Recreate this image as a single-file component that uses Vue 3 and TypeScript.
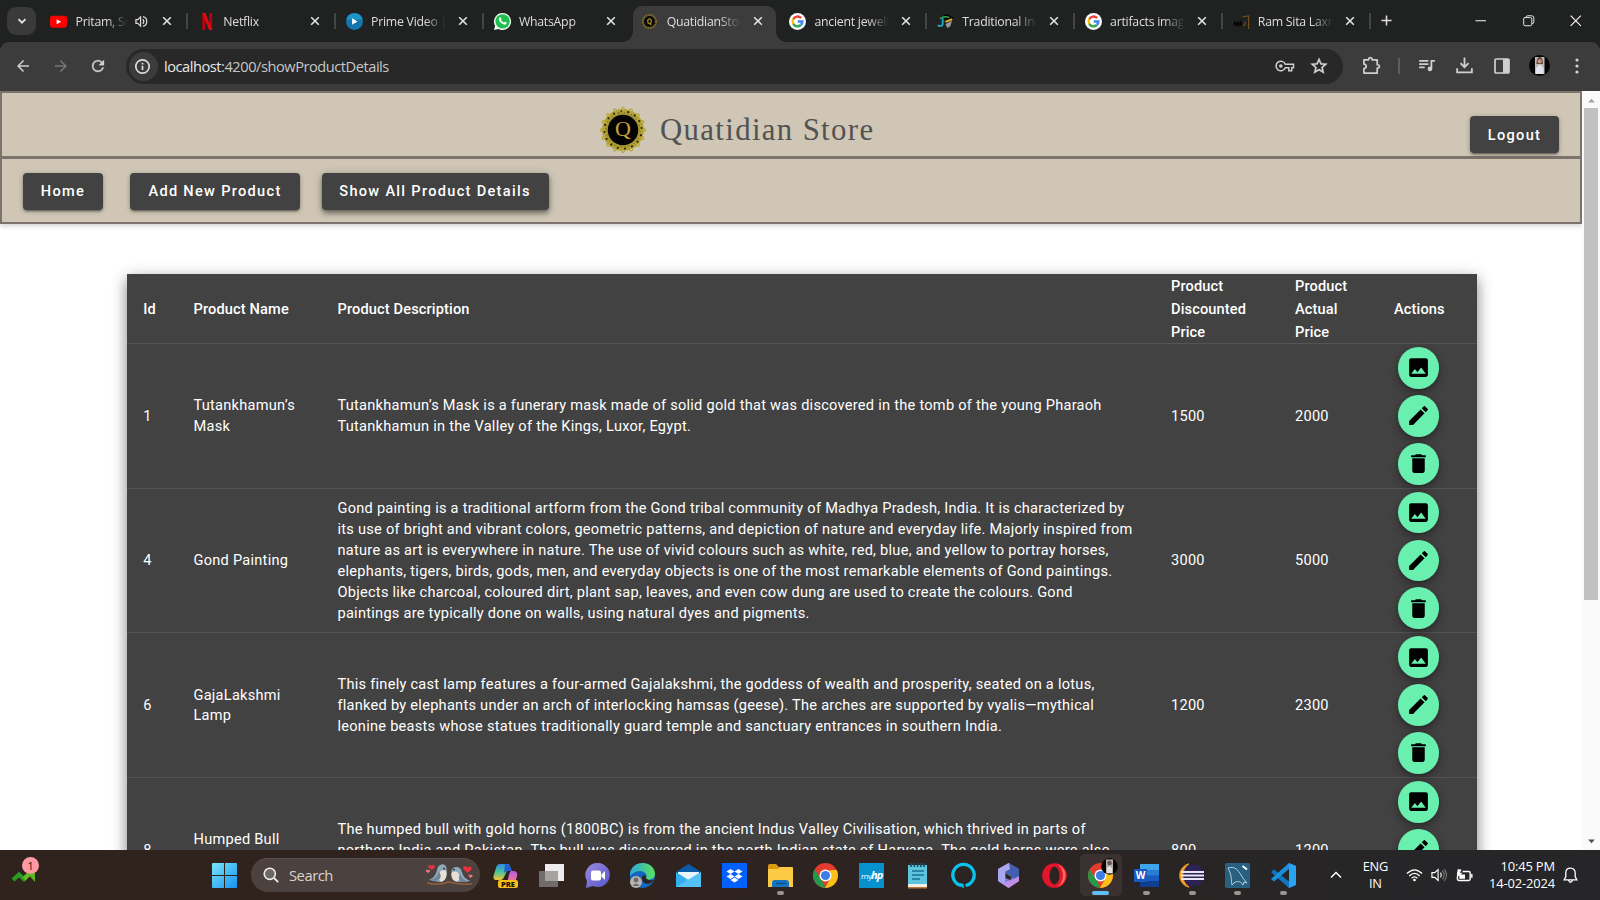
<script setup lang="ts">
interface Tab {
  title: string
  icon: string
  active?: boolean
  audio?: boolean
}
interface Product {
  id: number
  name: string[]
  lines: string[]
  discounted: number
  actual: number
}

const tabs: Tab[] = [
  { title: 'Pritam, Song', icon: 'youtube', audio: true },
  { title: 'Netflix', icon: 'netflix' },
  { title: 'Prime Video | ', icon: 'prime' },
  { title: 'WhatsApp', icon: 'whatsapp' },
  { title: 'QuatidianStore', icon: 'store', active: true },
  { title: 'ancient jewellery', icon: 'google' },
  { title: 'Traditional Indian', icon: 'trad' },
  { title: 'artifacts images', icon: 'google' },
  { title: 'Ram Sita Laxman', icon: 'ram' },
]

const products: Product[] = [
  {
    id: 1,
    name: ['Tutankhamun’s', 'Mask'],
    lines: [
      'Tutankhamun’s Mask is a funerary mask made of solid gold that was discovered in the tomb of the young Pharaoh',
      'Tutankhamun in the Valley of the Kings, Luxor, Egypt.',
    ],
    discounted: 1500,
    actual: 2000,
  },
  {
    id: 4,
    name: ['Gond Painting'],
    lines: [
      'Gond painting is a traditional artform from the Gond tribal community of Madhya Pradesh, India. It is characterized by',
      'its use of bright and vibrant colors, geometric patterns, and depiction of nature and everyday life. Majorly inspired from',
      'nature as art is everywhere in nature. The use of vivid colours such as white, red, blue, and yellow to portray horses,',
      'elephants, tigers, birds, gods, men, and everyday objects is one of the most remarkable elements of Gond paintings.',
      'Objects like charcoal, coloured dirt, plant sap, leaves, and even cow dung are used to create the colours. Gond',
      'paintings are typically done on walls, using natural dyes and pigments.',
    ],
    discounted: 3000,
    actual: 5000,
  },
  {
    id: 6,
    name: ['GajaLakshmi', 'Lamp'],
    lines: [
      'This finely cast lamp features a four-armed Gajalakshmi, the goddess of wealth and prosperity, seated on a lotus,',
      'flanked by elephants under an arch of interlocking hamsas (geese). The arches are supported by vyalis—mythical',
      'leonine beasts whose statues traditionally guard temple and sanctuary entrances in southern India.',
    ],
    discounted: 1200,
    actual: 2300,
  },
  {
    id: 8,
    name: ['Humped Bull', '\u00a0'],
    lines: [
      'The humped bull with gold horns (1800BC) is from the ancient Indus Valley Civilisation, which thrived in parts of',
      'northern India and Pakistan. The bull was discovered in the north Indian state of Haryana. The gold horns were also',
      '\u00a0',
    ],
    discounted: 800,
    actual: 1200,
  },
]

const actionIcons: string[] = [
  'M21 19V5c0-1.1-.9-2-2-2H5c-1.1 0-2 .9-2 2v14c0 1.1.9 2 2 2h14c1.1 0 2-.9 2-2zM8.5 13.5l2.5 3.01L14.5 12l4.500 6H5l3.500-4.500z',
  'M3 17.25V21h3.750L17.810 9.940l-3.750-3.750L3 17.250zM20.710 7.040c.39-.39.39-1.020 0-1.410l-2.340-2.340c-.39-.39-1.020-.39-1.410 0l-1.830 1.830 3.750 3.750 1.830-1.830z',
  'M6 19c0 1.100.9 2 2 2h8c1.100 0 2-.9 2-2V7H6v12zM19 4h-3.500l-1-1h-5l-1 1H5v2h14V4z',
]
const petals = Array.from({ length: 16 }, (_, i) => i * 22.5)
</script>

<template>
  <div class="screen">
    <div class="tabstrip">
      <div class="tabsearch">
        <svg width="12" height="12" viewBox="0 0 12 12"><path d="M2.500 4.200 6 7.700l3.500-3.500" fill="none" stroke="#e4e4e4" stroke-width="1.800" /></svg>
      </div>
      <div class="tabs">
        <div v-for="(t, i) in tabs" :key="i" class="tab" :class="{ active: t.active, sep: !t.active && i !== 3 }">
          <svg class="fav" viewBox="0 0 18 18">
            <g v-if="t.icon === 'youtube'"><rect x="0" y="3" width="18" height="12.500" rx="3" fill="#f00" /><path d="M7 6.500v5.500L11.800 9.200z" fill="#fff" /></g>
            <g v-else-if="t.icon === 'netflix'"><path d="M4.500 0h3.200v18H4.500zM11.800 0H15v18h-3.200z" fill="#b1060f" /><path d="M4.500 0h3.200L15 18h-3.200z" fill="#e50914" /></g>
            <g v-else-if="t.icon === 'prime'"><circle cx="9" cy="9" r="9" fill="#1475ae" /><path d="M.3 7a9 9 0 0 1 17.400 0z" fill="#1c94c9" /><path d="M6.500 5.500v7L12.200 9z" fill="#fff" /></g>
            <g v-else-if="t.icon === 'whatsapp'">
              <path d="M9 0a9 9 0 1 1-4.200 16.900L0 18l1.200-4.500A9 9 0 0 1 9 0z" fill="#f4f8f4" /><circle cx="9.100" cy="8.900" r="7.600" fill="#1fbf4b" />
              <path d="M6.200 4.800c.8-.6 1.200-.1 1.700 1.400.1.500-.7 1-.5 1.300.6 1.200 1.700 2.100 2.900 2.600.4.100.9-1.100 1.300-.9l1.700.9c.5.400-.2 2.200-1.800 2.300-2.300.1-6.300-3.200-6.400-5.700 0-.8.400-1.500 1.100-1.900z" fill="#fff" />
            </g>
            <g v-else-if="t.icon === 'store'"><circle cx="9" cy="9" r="7" fill="none" stroke="#7d6c22" stroke-width="2" stroke-dasharray="2 .8" /><circle cx="9" cy="9" r="5.800" fill="#080806" /><ellipse cx="9" cy="8.700" rx="1.900" ry="2.500" fill="none" stroke="#a8861f" stroke-width="1.300" /><path d="M9 11l2 1.800" stroke="#a8861f" stroke-width="1.200" /></g>
            <g v-else-if="t.icon === 'google'">
              <circle cx="9" cy="9" r="9" fill="#fff" /><g fill="none" stroke-width="2.600"><path d="M4.500 6.500A5.200 5.200 0 0 1 12.800 5.400" stroke="#ea4335" /><path d="M4.500 6.500a5.200 5.200 0 0 0 0 5" stroke="#fbbc05" /><path d="M4.500 11.500a5.200 5.200 0 0 0 8 1.200" stroke="#34a853" /><path d="M12.500 12.700A5.200 5.200 0 0 0 14.200 9H9.200" stroke="#4285f4" /></g>
            </g>
            <g v-else-if="t.icon === 'trad'"><path d="M2 5l8-4 8 4-6 3z" fill="#050505" /><path d="M3 6c4-3 8-2 10-1" stroke="#39a45b" stroke-width="1.500" fill="none" /><path d="M6 5.500v6c0 3-4 3-5 1" fill="none" stroke="#17a7c8" stroke-width="2" /><path d="M9 9.500l7-3" stroke="#e6b32c" stroke-width="2" /><path d="M9 12l7-4-2 6-3 2z" fill="#999" /></g>
            <g v-else><path d="M1 13l1-3 2 3 1-3 2 3 1-3 2 4" fill="none" stroke="#080808" stroke-width="2" /><path d="M10 4l6.500-1v14M10 13c2 1 3-1 3-4" fill="none" stroke="#70501d" stroke-width="1.200" /></g>
          </svg>
          <span class="title">{{ t.title }}</span>
          <svg v-if="t.audio" class="audio" viewBox="0 0 14 14"><path d="M1 5h2l3-3v10L3 9H1z" fill="none" stroke="#ddd" stroke-width="1.300" /><path d="M8.500 4.500q2 2.500 0 5M8.500 1.800c5.500 1 5.500 9.400 0 10.400" fill="none" stroke="#ddd" stroke-width="1.300" /></svg>
          <svg class="close" viewBox="0 0 10 10"><path d="M1.200 1.200l7.600 7.600M8.800 1.200 1.200 8.800" stroke="#e2e2e2" stroke-width="1.600" /></svg>
        </div>
      </div>
      <svg class="plus" viewBox="0 0 12 12"><path d="M6 .5v11M.5 6h11" stroke="#ddd" stroke-width="1.700" /></svg>
      <div class="winctl">
        <svg viewBox="0 0 12 12"><path d="M.5 6h11" stroke="#fff" stroke-width="1" /></svg>
        <svg viewBox="0 0 12 12"><rect x=".7" y="2.700" width="8.500" height="8.500" rx="1.500" fill="none" stroke="#eee" /><path d="M3 2.500Q3 .8 5 .8h4q2.300 0 2.300 2.300v4q0 2-1.800 2" fill="none" stroke="#eee" /></svg>
        <svg viewBox="0 0 12 12"><path d="M.7.700l10.600 10.600M11.300.700.700 11.300" stroke="#fff" stroke-width="1.100" /></svg>
      </div>
    </div>

    <div class="toolbar">
      <svg class="nav" viewBox="0 0 24 24"><path d="M20 11H7.830l5.590-5.590L12 4l-8 8 8 8 1.410-1.410L7.830 13H20z" fill="#cfcfcf" /></svg>
      <svg class="nav" viewBox="0 0 24 24"><path d="M4 13h12.170l-5.590 5.590L12 20l8-8-8-8-1.410 1.410L16.170 11H4z" fill="#757575" /></svg>
      <svg class="nav" viewBox="0 0 24 24"><path d="M17.650 6.350A7.960 7.960 0 0 0 12 4a8 8 0 1 0 7.730 10h-2.080A6 6 0 1 1 12 6c1.660 0 3.140.69 4.220 1.780L13 11h7V4z" fill="#cfcfcf" stroke="#cfcfcf" stroke-width=".4" /></svg>
      <div class="omnibox">
        <span class="info"><svg viewBox="0 0 16 16"><circle cx="8" cy="8" r="6.300" fill="none" stroke="#ddd" stroke-width="1.600" /><path d="M8 7.200v4.200M8 4.500v1.600" stroke="#ddd" stroke-width="1.600" /></svg></span>
        <span class="url"><b>localhost</b>:4200/showProductDetails</span>
        <svg class="key" viewBox="0 0 20 14"><path d="M10.300 5.200h8.200v3.600h-1.800v2.900h-2.900V8.800h-3.500a4.800 4.800 0 1 1 0-3.600z" fill="none" stroke="#cfcfcf" stroke-width="1.500" /><circle cx="5.800" cy="7" r="1.800" fill="#cfcfcf" /></svg>
        <svg class="star" viewBox="0 0 24 24"><path d="M22 9.240l-7.190-.62L12 2 9.190 8.630 2 9.240l5.460 4.730L5.820 21 12 17.270 18.180 21l-1.630-7.030L22 9.240zM12 15.400l-3.760 2.270 1-4.280-3.320-2.880 4.380-.38L12 6.100l1.710 4.040 4.380.38-3.320 2.880 1 4.280L12 15.400z" fill="#d8d8d8" stroke="#d8d8d8" stroke-width=".4" /></svg>
      </div>
      <svg class="t-ext" viewBox="0 0 20 20"><path d="M2 4h5V3.500a1.800 1.800 0 0 1 3.600 0V4H16v5.200h.5a1.800 1.800 0 0 1 0 3.600H16V18H2v-4.700c3.300-.5 3.300-4.400 0-4.800z" fill="none" stroke="#cfcfcf" stroke-width="1.800" stroke-linejoin="round" /></svg>
      <i class="bar"></i>
      <svg class="t-media" viewBox="0 0 18 14"><path d="M0 2h10M0 5.500h10M0 9h6" stroke="#cfcfcf" stroke-width="1.700" /><path d="M13.200 10.500V2H17" fill="none" stroke="#cfcfcf" stroke-width="1.900" /><circle cx="11.600" cy="10.700" r="2.500" fill="#cfcfcf" /></svg>
      <svg class="t-down" viewBox="0 0 18 18"><path d="M9 .5V10M4.700 6.500 9 10.800l4.300-4.300M1.200 12v4.200h15.600V12" fill="none" stroke="#cfcfcf" stroke-width="1.900" /></svg>
      <svg class="t-side" viewBox="0 0 16 16"><rect x="1" y="1" width="14" height="14" rx="1" fill="none" stroke="#cfcfcf" stroke-width="1.700" /><path d="M9 1h6v14H9z" fill="#cfcfcf" /></svg>
      <svg class="t-av" viewBox="0 0 21 21"><circle cx="10.500" cy="10.500" r="10.500" fill="#050505" /><path d="M6 2h9.500v17H6z" fill="#bdb8b4" /><path d="M7.500 9q0-7 3.200-7t3.200 7z" fill="#5a3b35" /><circle cx="10.700" cy="6.200" r="2.200" fill="#c98f7e" /><path d="M7 19v-6l3.500-3.500L14.500 13v6z" fill="#dfe4ea" /></svg>
      <svg class="t-dots" viewBox="0 0 4 16"><circle cx="2" cy="2" r="1.600" fill="#d5d5d5" /><circle cx="2" cy="8" r="1.600" fill="#d5d5d5" /><circle cx="2" cy="14" r="1.600" fill="#d5d5d5" /></svg>
    </div>

    <div class="viewport">
      <div class="page">
        <header>
          <div class="brand">
            <svg class="logo" viewBox="0 0 48 48">
              <g v-for="p in petals" :key="p" :transform="`rotate(${p} 24 24)`"><path d="M19.700 9c-1.500-4 0-6.500 2.300-5.500C21.800.2 26.200.2 26 3.500c2.300-1 3.800 1.500 2.300 5.500z" fill="#b3a238" /><circle cx="22" cy="5.500" r="1.100" fill="#2a250c" /><circle cx="26.300" cy="7" r=".9" fill="#3b340f" /><circle cx="24" cy="2.800" r=".6" fill="#efe9a0" /></g>
              <circle cx="24" cy="24" r="16.500" fill="none" stroke="#a08f2d" stroke-width="1.500" stroke-dasharray="3 1.500" />
              <circle cx="24" cy="24" r="15.300" fill="#030303" />
              <text x="24" y="30.200" text-anchor="middle" class="q">Q</text>
            </svg>
            <span class="brandname">Quatidian Store</span>
            <button class="btn logout">Logout</button>
          </div>
          <nav class="menu">
            <button class="btn home">Home</button>
            <button class="btn add">Add New Product</button>
            <button class="btn show">Show All Product Details</button>
          </nav>
        </header>
        <main class="table">
          <div class="row head">
            <span>Id</span><span>Product Name</span><span>Product Description</span>
            <span>Product<br />Discounted<br />Price</span><span>Product<br />Actual<br />Price</span><span>Actions</span>
          </div>
          <div v-for="p in products" :key="p.id" class="row">
            <span>{{ p.id }}</span>
            <span><div v-for="n in p.name" :key="n">{{ n }}</div></span>
            <span><div v-for="l in p.lines" :key="l">{{ l }}</div></span>
            <span>{{ p.discounted }}</span>
            <span>{{ p.actual }}</span>
            <span class="actions">
              <button v-for="(d, k) in actionIcons" :key="k" class="fab"><svg viewBox="0 0 24 24"><path :d="d" /></svg></button>
            </span>
          </div>
        </main>
      </div>
      <div class="scroll">
        <svg viewBox="0 0 10 6"><path d="M1 5.500 5 1l4 4.500z" fill="#a3a3a3" /></svg>
        <div class="thumb"></div>
        <svg class="dn" viewBox="0 0 10 6"><path d="M1 .5 5 5 9 .5z" fill="#505050" /></svg>
      </div>
    </div>

    <footer class="taskbar">
      <div class="widget">
        <svg viewBox="0 0 26 26"><path d="M2 21l6-5.500 5 4.500 7-7" fill="none" stroke="#2c9a22" stroke-width="4.200" /><path d="M13 20l8-8" stroke="#68bd25" stroke-width="4.200" /><path d="M15 13h9v10z" fill="#5db51f" /></svg>
        <span class="badge">1</span>
      </div>
      <svg class="start" viewBox="0 0 25 25"><defs><linearGradient id="win" gradientUnits="userSpaceOnUse" x1="0" y1="0" x2="25" y2="25"><stop offset="0" stop-color="#7be6fb" /><stop offset="1" stop-color="#1493ef" /></linearGradient></defs><path d="M0 1q0-1 1-1h11v12H0zM13 0h11q1 0 1 1v11H13zM0 13h12v12H1q-1 0-1-1zM13 13h12v11q0 1-1 1H13z" fill="url(#win)" /></svg>
      <div class="search">
        <svg class="glass" viewBox="0 0 16 16"><circle cx="6.800" cy="6.800" r="5.600" fill="#6d6765" stroke="#ececec" stroke-width="1.600" /><path d="M11 11l4.200 4.200" stroke="#ececec" stroke-width="1.800" /></svg>
        <span>Search</span>
        <svg class="birds" viewBox="0 0 50 24">
          <path d="M2 20q12 3 22-1 12 3 24 2" fill="none" stroke="#8a5d3b" stroke-width="1.800" />
          <path d="M4 17q6-2 8-9c1-8 9-9 10-3 1 8-1 14-7 14-4 0-5-1-11-2z" fill="#8ea9bb" /><path d="M16 8q6-3 6 3 0 7-6 8-5-5 0-11z" fill="#e8dfd5" /><path d="M5 17q8-1 9-9 5 8-2 10z" fill="#6d8799" />
          <path d="M46 18q-6-2-8-8c-1-8-10-8-11-2-1 7 1 11 7 11 4 0 6 0 12-1z" fill="#8ea9bb" /><path d="M33 9q-6-2-6 3 1 6 6 7 5-5 0-10z" fill="#e8dfd5" /><path d="M46 19q-8-1-10-8-4 7 3 8z" fill="#6d8799" />
          <circle cx="19.500" cy="5.500" r=".9" fill="#222" /><circle cx="29.500" cy="6.500" r=".9" fill="#222" />
          <path d="M7 7 3.500 4c-1-2 2-3 3-1 1-2 4-1 3.500 1zM43.500 10 39 6c-1-3 3-4 4.500-1.500C45 2 48.500 4 47.500 6.500z" fill="#ea3340" /><path d="M3 10 .8 8C.5 6.500 2.500 6 3 7.300 4 6 5.500 7 5 8.500zM46.500 15l-2-2c-.3-1.500 1.700-2 2-.6.800-1.200 2.500-.4 2 1z" fill="#f47983" />
        </svg>
      </div>
      <div class="apps">
        <div class="app">
          <svg viewBox="0 0 25 25"><defs><linearGradient id="cpa" x1="0" y1="0" x2="0" y2="1"><stop offset="0" stop-color="#2d8be8" /><stop offset=".5" stop-color="#49c596" /><stop offset="1" stop-color="#f7c431" /></linearGradient><linearGradient id="cpb" x1="0" y1="0" x2="0" y2="1"><stop offset="0" stop-color="#b45cf0" /><stop offset="1" stop-color="#ff7b7b" /></linearGradient></defs>
            <path d="M7 1h8q2 0 1.500 2L11 14q-1 3-4 3H3q-3 0-2.500-4L3 5q1-4 4-4z" fill="url(#cpa)" /><path d="M12 1q5 0 6 4l1 3h-5l-3 2z" fill="#235fcf" /><path d="M18 8h3q4 1 3 5l-2 7h-8l2-8q.500-3 2-4z" fill="url(#cpb)" /><rect x="5" y="17" width="20" height="8" rx="2" fill="#f7bd1b" /><text x="15" y="23.600" text-anchor="middle" class="pre">PRE</text></svg>
        </div>
        <div class="app"><svg viewBox="0 0 25 25"><path d="M6 1h19v17H6z" fill="#ededed" /><path d="M0 8h19v16H0z" fill="#6f6c6b" /><path d="M6 8h13v10H6z" fill="#a5a3a2" /></svg></div>
        <div class="app"><svg viewBox="0 0 25 25"><defs><linearGradient id="ch" x1="0" y1="0" x2="1" y2="1"><stop offset="0" stop-color="#9a8be0" /><stop offset="1" stop-color="#5656c8" /></linearGradient></defs><path d="M13 0a12 12 0 1 1-5 23L1 25l1-7A12 12 0 0 1 13 0z" fill="url(#ch)" /><rect x="6" y="7.500" width="10" height="10" rx="2" fill="#fff" /><path d="M16.500 11.500 20 8v9l-3.500-3.500z" fill="#fff" /></svg></div>
        <div class="app"><svg viewBox="0 0 25 25"><defs><linearGradient id="ed" x1="0" y1="0" x2="1" y2="0"><stop offset="0" stop-color="#2aa9df" /><stop offset="1" stop-color="#5be05a" /></linearGradient></defs><circle cx="12.500" cy="12.500" r="12.500" fill="#1566bd" /><path d="M0 11C1-3 24-4 25 11c0 6-8 7-9 4 2-3-1-7-6-7-4 0-8 2-10 5z" fill="url(#ed)" /><path d="M16 13c-1 4 4 5 8 4l-3 3c-6 2-9-1-9-5q0-4 4-2z" fill="#2e2321" /><circle cx="6" cy="19" r="6" fill="#b8b4b1" /><circle cx="6" cy="17" r="2.400" fill="#706a67" /><path d="M2.500 23q3.500-5 7 0z" fill="#706a67" /></svg></div>
        <div class="app"><svg viewBox="0 0 25 25"><path d="M0 9 12.500 1 25 9z" fill="#0a5ca8" /><path d="M2 9h21v9H2z" fill="#e9f5fc" /><path d="M0 9l12.500 8L25 9v15H0z" fill="#35aef0" /><path d="M25 9v15H0z" fill="#55c2f7" /></svg></div>
        <div class="app"><svg viewBox="0 0 25 25"><path d="M0 0h25v25H0z" fill="#0061fe" /><path d="M8.500 6l4 2.500-4 2.500-4-2.500zM16.500 6l4 2.500-4 2.500-4-2.500zM8.500 11l4 2.500-4 2.500-4-2.500zM16.500 11l4 2.500-4 2.500-4-2.500zM12.500 14.500l4 2.500-4 2.500-4-2.500z" fill="#fff" /></svg></div>
        <div class="app run"><svg viewBox="0 0 25 25"><path d="M0 3q0-2 2-2h6l3 3h14v6H0z" fill="#dc9a12" /><path d="M0 6h10l2-2h11q2 0 2 2v18H0z" fill="#fcca45" /><path d="M4 24v-4q0-3 3-3h11q3 0 3 3v4z" fill="#1473bd" /><path d="M8 20.500h10" stroke="#0c4f91" stroke-width="1.500" /></svg></div>
        <div class="app"><svg viewBox="0 0 25 25"><circle cx="12.500" cy="12.500" r="12.500" fill="#e33b2e" /><path d="M1.700 6.300 9 18l3.500 7A12.500 12.500 0 0 1 1.700 6.300z" fill="#23994a" /><path d="M23.700 7A12.500 12.500 0 0 1 12 25l6-11-1-7z" fill="#fbc116" /><circle cx="12.500" cy="12.500" r="6" fill="#fff" /><circle cx="12.500" cy="12.500" r="4.600" fill="#3b7de9" /></svg></div>
        <div class="app"><svg viewBox="0 0 25 25"><path d="M0 0h25v25H0z" fill="#0891cf" /><text x="2" y="15.500" class="my">my</text><text x="12" y="16" class="hp">hp</text></svg></div>
        <div class="app"><svg viewBox="0 0 25 25"><path d="M3 2h19v22H3z" fill="#5cc4dc" /><path d="M3 21h19v4H3z" fill="#f3efe6" /><path d="M3 24h19v1.500H3z" fill="#b8763a" /><path d="M6 0v4M9.300 0v4M12.600 0v4M15.900 0v4M19 0v4" stroke="#174d66" stroke-width="1.600" /><path d="M7 8h12M7 12h12M7 16h8" stroke="#1e6d92" stroke-width="1.500" /></svg></div>
        <div class="app"><svg viewBox="0 0 25 25"><path d="M10.500 22.500a10.700 10.700 0 1 1 4 0" fill="none" stroke="#09c3ed" stroke-width="3.300" /><path d="M9 20q1 5 4 5l-.5-4z" fill="#09c3ed" /></svg></div>
        <div class="app"><svg viewBox="0 0 25 25"><path d="M12.500 0 23 6v12l-10.500 7L2 18V6z" fill="#7f78d8" /><path d="M13 0 2 6v12l7 4 .500-13 5.500-3z" fill="#a7a8ed" /><path d="M23 6v12l-6-3-8-6 5-3-1-6z" fill="#415fae" /><path d="M2 18l10.500 7L23 18v-5l-7 4-4 1-6 3z" fill="#c090e7" /><path d="M9.500 10l6.500 4.500-2 2.500-4.500-2z" fill="#2e2421" /></svg></div>
        <div class="app"><svg viewBox="0 0 25 25"><circle cx="12.500" cy="12.500" r="12.300" fill="#e3152b" /><path d="M15 1a12 12 0 0 1 0 23c8-5 8-18 0-23z" fill="#ff6a60" /><ellipse cx="12.500" cy="12.500" rx="5" ry="9" fill="#2d2422" /></svg></div>
        <div class="app run on">
          <svg viewBox="0 0 25 25"><circle cx="12.500" cy="12.500" r="12.500" fill="#e33b2e" /><path d="M1.700 6.300 9 18l3.500 7A12.500 12.500 0 0 1 1.700 6.300z" fill="#23994a" /><path d="M23.700 7A12.500 12.500 0 0 1 12 25l6-11-1-7z" fill="#fbc116" /><circle cx="12.500" cy="12.500" r="6" fill="#fff" /><circle cx="12.500" cy="12.500" r="4.600" fill="#3b7de9" /><circle cx="21.500" cy="3.500" r="8.300" fill="#080707" /><path d="M18-3.500h7v14h-7z" fill="#b5afaa" /><circle cx="21.500" cy="0" r="2.300" fill="#725148" /><path d="M19 10V5l2.500-2L24 5v5z" fill="#e1e1e1" /></svg>
        </div>
        <div class="app run"><svg viewBox="0 0 25 25"><path d="M6 1h19v8H6z" fill="#41a5ee" /><path d="M6 7h19v6H6z" fill="#2b7cd3" /><path d="M6 12.500h19v6H6z" fill="#185abd" /><path d="M6 18h19v6H6z" fill="#103f91" /><path d="M0 6h13v13H0z" fill="#185abd" /><text x="6.500" y="16.300" text-anchor="middle" class="w">W</text></svg></div>
        <div class="app run"><svg viewBox="0 0 25 25"><circle cx="14" cy="12.500" r="11" fill="#2c2255" /><path d="M10 .8A12 12 0 0 0 10 24.200 14 14 0 0 1 10 .8z" fill="#f79f26" stroke="#f79f26" /><path d="M2 9h23M2 12.500h23M2 16h23" stroke="#e9e6f5" stroke-width="1.900" /></svg></div>
        <div class="app run"><svg viewBox="0 0 25 25"><rect width="25" height="25" rx="1.500" fill="#27617f" /><path d="M3 5c7-2 10 2 13 7 2 3 3 5 6 8l-3-1-1 3c-3-5-6-3-8-3l-3 3C6 17 7 12 3 5z" fill="none" stroke="#b9ced9" stroke-width="1" /><path d="M17.500 3l4.500 3.500" stroke="#fff" stroke-width="1.800" /></svg></div>
        <div class="app run"><svg viewBox="0 0 25 25"><path d="M18 0l7 3v19l-7 3L0 9l3-2.500 15 12z" fill="#0f78c4" /><path d="M18 0v6L3 18.500 0 16z" fill="#1a8fdd" /><path d="M18 0l7 3v19l-7 3z" fill="#29a3f0" /></svg></div>
      </div>
      <svg class="chev" viewBox="0 0 12 8"><path d="M1 6.500 6 1.500l5 5" fill="none" stroke="#fff" stroke-width="1.500" /></svg>
      <div class="lang">ENG<br />IN</div>
      <svg class="wifi" viewBox="0 0 18 14"><g fill="none" stroke="#fff" stroke-width="1.400"><path d="M1 5.500q8-8 16 0M3.500 8q5.500-5.500 11 0M6 10.500q3-3 6 0" /></g><circle cx="9" cy="12.300" r="1.400" fill="#fff" /></svg>
      <svg class="spk" viewBox="0 0 18 14"><path d="M1 4.500h3L7.500 1.200v11.600L4 9.500H1z" fill="none" stroke="#fff" stroke-width="1.200" /><path d="M10 4.500q1.800 2.500 0 5" fill="none" stroke="#ddd" stroke-width="1.300" /><path d="M12 2.500q4 4.500 0 9M14 .8q5 6.200 0 12.400" fill="none" stroke="#777" stroke-width="1.200" /></svg>
      <svg class="bat" viewBox="0 0 18 14"><path d="M7 2.700h6.500q1.500 0 1.500 1.500v6.600q0 1.500-1.500 1.500H3q-1.500 0-1.500-1.500V8" fill="none" stroke="#fff" stroke-width="1.500" /><path d="M16 5.500h1.500v4H16z" fill="#fff" /><path d="M3.500 6h6v4.500h-6zM2 0l4 1-2 3h3L1 9V5z" fill="#fff" /></svg>
      <div class="clock">10:45 PM<br />14-02-2024</div>
      <svg class="bell" viewBox="0 0 15 17"><path d="M7.500 1.200c-3 0-4.700 2-4.700 4.800v3.500L1.200 12.800h12.600l-1.600-3.300V6c0-2.800-1.700-4.800-4.700-4.800zM5.500 13.500q2 3.500 4 0" fill="none" stroke="#fff" stroke-width="1.300" /></svg>
    </footer>
  </div>
</template>

<style>
html, body { margin: 0; overflow: hidden; background: #fff; }
</style>

<style scoped>
* { box-sizing: border-box; }
svg { display: block; flex: none; overflow: visible; }
button { border: 0; padding: 0; }
.screen { width: 1600px; height: 900px; display: flex; flex-direction: column; overflow: hidden; background: #202221; font-family: Roboto, sans-serif; }

.tabstrip { height: 42px; flex: none; display: flex; align-items: flex-start; background: #202221; font-family: "Open Sans", "Noto Sans", sans-serif; }
.tabsearch { width: 29px; height: 28px; margin: 7px 0 0 7px; border-radius: 9px; background: #3a3a3a; display: grid; place-items: center; }
.tabs { display: flex; margin-left: 3.500px; }
.tab { width: 147.800px; height: 42px; padding: 0 15px 0 10.700px; display: flex; align-items: center; position: relative; }
.tab.sep::after { content: ""; position: absolute; right: -1.200px; top: 13px; width: 2px; height: 16px; background: #454545; }
.tab.active::before { content: ""; position: absolute; left: 2.500px; right: 2.800px; top: 6px; bottom: 0; background: #3c3c3c; border-radius: 9px 9px 0 0; }
.tab.active::after { content: ""; position: absolute; left: -7.500px; right: -7.200px; bottom: 0; height: 10px; background: radial-gradient(circle at 0 0, transparent 9.500px, #3c3c3c 10px) left / 10px 10px no-repeat, radial-gradient(circle at 100% 0, transparent 9.500px, #3c3c3c 10px) right / 10px 10px no-repeat; }
.fav { width: 17px; height: 17px; position: relative; }
.title { position: relative; margin-left: 8.300px; flex: 1; min-width: 0; font-size: 12.300px; letter-spacing: -.25px; color: #dedede; white-space: nowrap; overflow: hidden; line-height: 20px; padding-top: 1px; -webkit-mask-image: linear-gradient(90deg, #000 calc(100% - 22px), transparent); mask-image: linear-gradient(90deg, #000 calc(100% - 22px), transparent); margin-right: 12px; }
.audio { width: 13px; height: 13px; margin-right: 14px; margin-left: -5px; }
.close { width: 10px; height: 10px; position: relative; }
.plus { width: 11px; height: 11px; margin: 15px 0 0 11.500px; }
.winctl { display: flex; gap: 36px; margin: 15px 18.500px 0 auto; }
.winctl svg { width: 11.500px; height: 11.500px; }

.toolbar { height: 49px; flex: none; background: #3c3c3c; display: flex; align-items: center; padding: 0 21px 2px 14px; border-radius: 9px 9px 0 0; }
.nav { width: 18px; height: 18px; margin-right: 19.500px; }
.omnibox { width: 1217px; height: 35px; border-radius: 18px; background: #282828; display: flex; align-items: center; padding: 0 14px 0 3px; margin-left: -1px; margin-top: 1px; }
.info { width: 29px; height: 29px; border-radius: 50%; background: #3c3c3c; display: grid; place-items: center; }
.info svg { width: 17px; height: 17px; margin-left: -1px; }
.url { flex: 1; margin-left: 6.500px; font: 14.600px "Open Sans", "Noto Sans", sans-serif; letter-spacing: -.45px; color: #c7c7c7; }
.url b { font-weight: 400; color: #e8e8e8; }
.key { width: 20px; height: 14px; margin-right: 14px; }
.star { width: 20px; height: 20px; }
.t-ext { width: 19px; height: 19px; margin-left: 19.500px; }
.bar { width: 1.500px; height: 16px; background: #5d5d5d; margin-left: 17px; }
.t-media { width: 17px; height: 13px; margin-left: 19.500px; }
.t-down { width: 17px; height: 17px; margin-left: 20px; }
.t-side { width: 16px; height: 16px; margin-left: 20.500px; }
.t-av { width: 21px; height: 21px; margin-left: 19px; }
.t-dots { width: 4px; height: 16px; margin-left: auto; }

.viewport { height: 759px; flex: none; display: flex; background: #fff; overflow: hidden; }
.page { width: 1582px; flex: none; }
header { height: 133px; border: 2px solid #7b736c; background: #cfc6b5; box-shadow: 0 2px 5px rgba(0, 0, 0, .18); }
.brand { height: 66px; border-bottom: 3px solid #7b736c; display: flex; align-items: center; padding-left: 597px; }
.logo { width: 48px; height: 48px; margin-top: 10px; }
.q { font: 22px "Liberation Serif", serif; fill: #c8a437; }
.brandname { font: 30.800px/40px "Liberation Serif", serif; letter-spacing: 1.350px; color: #525252; margin: 11px 0 0 13px; white-space: nowrap; }
.btn { height: 37px; border-radius: 4px; background: #424242; color: #fff; font: 500 14.583px Roboto, sans-serif; letter-spacing: 1.300px; box-shadow: 0 3px 1px -2px rgba(0, 0, 0, .2), 0 2px 2px rgba(0, 0, 0, .2), 0 1px 5px rgba(0, 0, 0, .25); white-space: nowrap; flex: none; }
.logout { width: 89px; margin: 20px 21px 0 auto; }
.menu { height: 63px; display: flex; align-items: center; padding: 1px 0 0 21px; }
.home { width: 80px; }
.add { width: 170px; margin-left: 27px; }
.show { width: 227px; margin-left: 21.500px; box-shadow: 0 2px 4px -1px rgba(0, 0, 0, .3), 0 4px 5px rgba(0, 0, 0, .25), 0 1px 10px rgba(0, 0, 0, .2); }

.table { width: 1350px; margin: 50px 0 0 126.500px; background: #424242; color: #fff; box-shadow: 0 8px 10px 1px rgba(0, 0, 0, .14), 0 3px 14px 2px rgba(0, 0, 0, .12), 0 5px 16px -1px rgba(0, 0, 0, .25); font-size: 14.583px; letter-spacing: .26px; line-height: 20.833px; }
.row { height: 144.600px; display: grid; grid-template-columns: 50.300px 144px 833.500px 124px 99px 99.200px; align-items: center; border-bottom: 1px solid #555; }
.row > span { padding: 1px 0 0 16.700px; white-space: nowrap; }
.head { height: 70px; font-weight: 500; line-height: 22.917px; letter-spacing: .14px; }
.row > .actions { display: flex; flex-direction: column; gap: 6.200px; padding: 0 0 0 20.300px; }
.fab { width: 41.700px; height: 41.700px; border-radius: 50%; background: #69f0ae; display: grid; place-items: center; box-shadow: 0 3px 5px -1px rgba(0, 0, 0, .2), 0 6px 10px rgba(0, 0, 0, .14), 0 1px 10px rgba(0, 0, 0, .12); }
.fab svg { width: 25px; height: 25px; fill: #000; }
.scroll { width: 18px; background: #fafafa; display: flex; flex-direction: column; align-items: center; padding-top: 7px; }
.scroll svg { width: 9px; height: 5px; }
.thumb { width: 14px; height: 492px; background: #c1c1c1; margin-top: 5px; }
.scroll .dn { margin: auto 0 6px; }

.taskbar { height: 50px; flex: none; display: flex; align-items: center; background: linear-gradient(90deg, #30231e 0, #30231e 35%, #2b2423 65%, #262628 90%); font-family: "Open Sans", "Noto Sans", sans-serif; color: #fff; }
.widget { width: 28px; height: 26px; margin: -4px 0 0 11px; position: relative; }
.widget svg { width: 26px; height: 26px; margin-top: -1px; }
.badge { position: absolute; left: 11px; top: -3px; width: 17px; height: 17px; border-radius: 50%; background: #ff99a4; color: #222; font-size: 11.500px; line-height: 17px; text-align: center; }
.start { width: 25px; height: 25px; margin: 0 0 0 172.500px; }
.search { width: 229px; height: 34px; border-radius: 17px; margin-left: 14.500px; background: #4b413e; border-top: 1px solid #5b524e; display: flex; align-items: center; padding: 0 6px 2px 12px; font-size: 14.800px; letter-spacing: -.5px; color: #d8d4d2; }
.glass { width: 16px; height: 16px; margin-right: 10px; }
.birds { width: 49px; height: 24px; margin-left: auto; }
.apps { display: flex; margin-left: 2.600px; }
.app { width: 45.780px; height: 50px; display: flex; align-items: center; justify-content: center; position: relative; }
.app svg { width: 25px; height: 25px; position: relative; }
.app.run::after { content: ""; position: absolute; left: 19.500px; bottom: 5px; width: 7px; height: 4px; border-radius: 2px; background: #9b9491; }
.app.on::before { content: ""; position: absolute; left: 2px; top: 4px; width: 42px; height: 42px; border-radius: 5px; background: #3a3130; }
.app.on::after { left: 14.500px; width: 17px; background: #62bdf5; }
.pre { font: 800 7.500px "Open Sans", sans-serif; fill: #1c1200; }
.my { font: 8px "Open Sans", sans-serif; fill: #fff; letter-spacing: -.5px; }
.hp { font: italic 700 11px "Open Sans", sans-serif; fill: #fff; letter-spacing: -1px; }
.w { font: 700 10px "Open Sans", sans-serif; fill: #fff; }
.chev { width: 12px; height: 8px; margin-left: 23.500px; }
.lang { width: 50px; margin-left: 8.500px; text-align: center; font-size: 12.800px; line-height: 17px; letter-spacing: -.3px; }
.wifi { width: 17px; height: 14px; margin-left: 5.500px; }
.spk { width: 17px; height: 14px; margin-left: 8px; }
.bat { width: 17px; height: 15px; margin-left: 8px; }
.clock { width: 76px; text-align: right; margin-left: 6px; font-size: 12.900px; line-height: 17px; letter-spacing: -.15px; white-space: nowrap; }
.bell { width: 15px; height: 17px; margin-left: 8.500px; }
</style>
